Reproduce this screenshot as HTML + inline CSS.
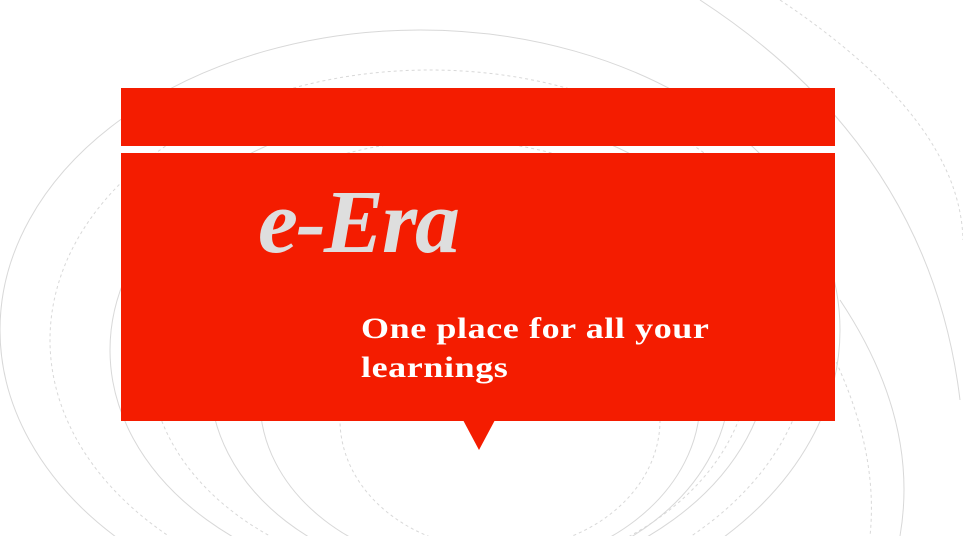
<!DOCTYPE html>
<html style="overflow:hidden"><head><style>
body{margin:0;width:963px;height:536px;overflow:hidden;background:#fff;position:relative;font-family:"Liberation Serif",serif}
.r{position:absolute;background:#f41c00;left:121px;width:714px}
</style></head><body>
<svg width="963" height="536" style="position:absolute;left:0;top:0" fill="none" stroke="#d8d8d8" stroke-width="1">
<ellipse cx="420" cy="330" rx="420" ry="300"/>
<ellipse cx="430" cy="340" rx="380" ry="270" stroke-dasharray="3 3"/>
<ellipse cx="440" cy="350" rx="330" ry="240"/>
<ellipse cx="450" cy="360" rx="300" ry="220" stroke-dasharray="3 3"/>
<ellipse cx="470" cy="380" rx="260" ry="200"/>
<ellipse cx="480" cy="400" rx="220" ry="170"/>
<ellipse cx="500" cy="420" rx="160" ry="130" stroke-dasharray="3 3"/>
<path d="M700 0 Q930 150 960 400"/>
<path d="M780 0 Q960 120 963 240" stroke-dasharray="3 3"/>
<path d="M840 300 Q920 420 900 536"/>
<path d="M820 330 Q880 440 870 536" stroke-dasharray="3 3"/>
</svg>
<div class="r" style="top:88px;height:58px"></div>
<div class="r" style="top:153px;height:268px"></div>
<div style="position:absolute;left:463px;top:420px;width:0;height:0;border-left:16px solid transparent;border-right:16px solid transparent;border-top:30px solid #f41c00"></div>
<div style="position:absolute;left:258px;top:173px;font-size:90px;font-style:italic;font-weight:bold;color:#dedede;line-height:100px;letter-spacing:-2px;white-space:nowrap">e-Era</div>
<div style="position:absolute;left:361px;top:309px;font-size:30px;font-weight:bold;color:#fff;line-height:39px;letter-spacing:0.5px;white-space:nowrap;transform:scaleX(1.2);transform-origin:0 0">One place for all your<br>learnings</div>
</body></html>
